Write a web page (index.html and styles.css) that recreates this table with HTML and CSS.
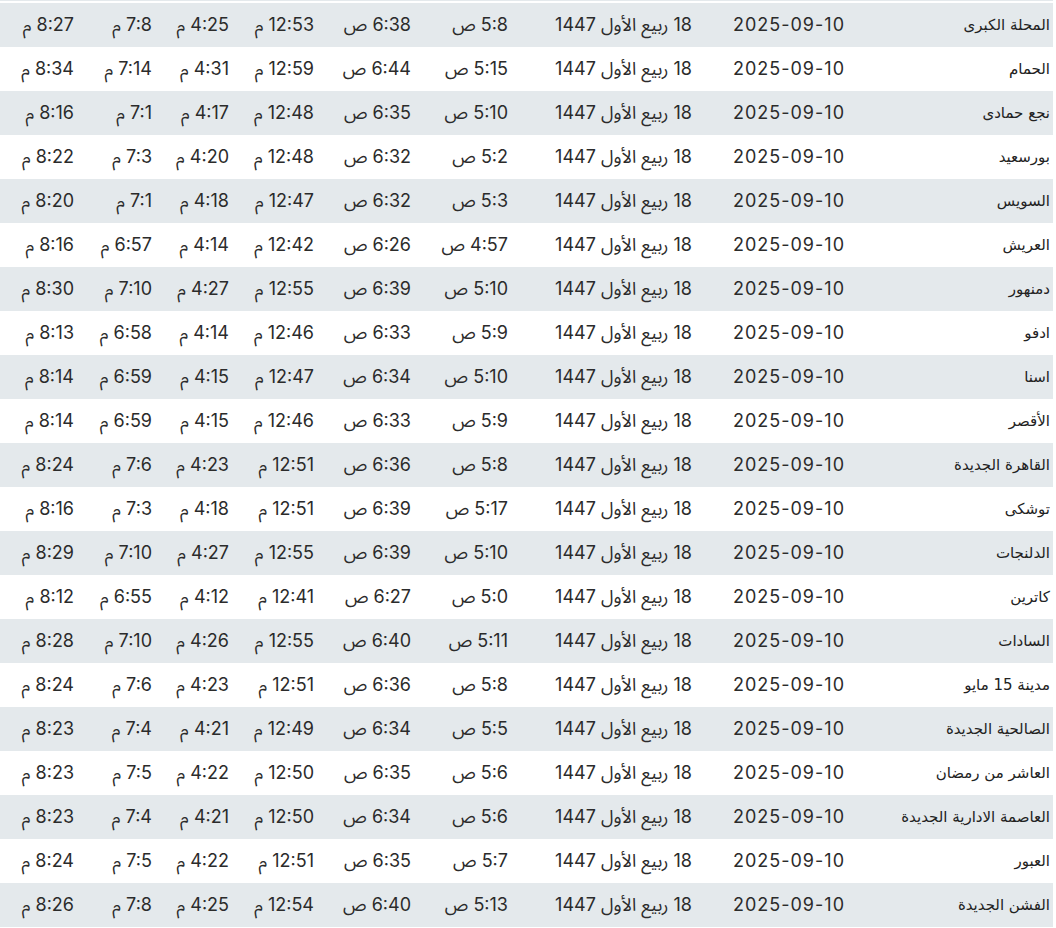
FILE: index.html
```html
<!DOCTYPE html>
<html lang="ar" dir="rtl">
<head>
<meta charset="utf-8">
<title>مواقيت الصلاة</title>
<link rel="stylesheet" href="styles.css">
</head>
<body>
<div class="topline"></div>
<table class="times">
<colgroup>
<col class="c-city"><col class="c-date"><col class="c-hijri"><col class="c-t1"><col class="c-t2"><col class="c-t3"><col class="c-t4"><col class="c-t5"><col class="c-t6">
</colgroup>
<tbody>
<tr><td class="city">المحلة الكبرى</td><td class="date">2025-09-10</td><td>18 ربيع الأول 1447</td><td>5:8 ص</td><td>6:38 ص</td><td>12:53 م</td><td>4:25 م</td><td>7:8 م</td><td>8:27 م</td></tr>
<tr><td class="city">الحمام</td><td class="date">2025-09-10</td><td>18 ربيع الأول 1447</td><td>5:15 ص</td><td>6:44 ص</td><td>12:59 م</td><td>4:31 م</td><td>7:14 م</td><td>8:34 م</td></tr>
<tr><td class="city">نجع حمادى</td><td class="date">2025-09-10</td><td>18 ربيع الأول 1447</td><td>5:10 ص</td><td>6:35 ص</td><td>12:48 م</td><td>4:17 م</td><td>7:1 م</td><td>8:16 م</td></tr>
<tr><td class="city">بورسعيد</td><td class="date">2025-09-10</td><td>18 ربيع الأول 1447</td><td>5:2 ص</td><td>6:32 ص</td><td>12:48 م</td><td>4:20 م</td><td>7:3 م</td><td>8:22 م</td></tr>
<tr><td class="city">السويس</td><td class="date">2025-09-10</td><td>18 ربيع الأول 1447</td><td>5:3 ص</td><td>6:32 ص</td><td>12:47 م</td><td>4:18 م</td><td>7:1 م</td><td>8:20 م</td></tr>
<tr><td class="city">العريش</td><td class="date">2025-09-10</td><td>18 ربيع الأول 1447</td><td>4:57 ص</td><td>6:26 ص</td><td>12:42 م</td><td>4:14 م</td><td>6:57 م</td><td>8:16 م</td></tr>
<tr><td class="city">دمنهور</td><td class="date">2025-09-10</td><td>18 ربيع الأول 1447</td><td>5:10 ص</td><td>6:39 ص</td><td>12:55 م</td><td>4:27 م</td><td>7:10 م</td><td>8:30 م</td></tr>
<tr><td class="city">ادفو</td><td class="date">2025-09-10</td><td>18 ربيع الأول 1447</td><td>5:9 ص</td><td>6:33 ص</td><td>12:46 م</td><td>4:14 م</td><td>6:58 م</td><td>8:13 م</td></tr>
<tr><td class="city">اسنا</td><td class="date">2025-09-10</td><td>18 ربيع الأول 1447</td><td>5:10 ص</td><td>6:34 ص</td><td>12:47 م</td><td>4:15 م</td><td>6:59 م</td><td>8:14 م</td></tr>
<tr><td class="city">الأقصر</td><td class="date">2025-09-10</td><td>18 ربيع الأول 1447</td><td>5:9 ص</td><td>6:33 ص</td><td>12:46 م</td><td>4:15 م</td><td>6:59 م</td><td>8:14 م</td></tr>
<tr><td class="city">القاهرة الجديدة</td><td class="date">2025-09-10</td><td>18 ربيع الأول 1447</td><td>5:8 ص</td><td>6:36 ص</td><td>12:51 م</td><td>4:23 م</td><td>7:6 م</td><td>8:24 م</td></tr>
<tr><td class="city">توشكى</td><td class="date">2025-09-10</td><td>18 ربيع الأول 1447</td><td>5:17 ص</td><td>6:39 ص</td><td>12:51 م</td><td>4:18 م</td><td>7:3 م</td><td>8:16 م</td></tr>
<tr><td class="city">الدلنجات</td><td class="date">2025-09-10</td><td>18 ربيع الأول 1447</td><td>5:10 ص</td><td>6:39 ص</td><td>12:55 م</td><td>4:27 م</td><td>7:10 م</td><td>8:29 م</td></tr>
<tr><td class="city">كاترين</td><td class="date">2025-09-10</td><td>18 ربيع الأول 1447</td><td>5:0 ص</td><td>6:27 ص</td><td>12:41 م</td><td>4:12 م</td><td>6:55 م</td><td>8:12 م</td></tr>
<tr><td class="city">السادات</td><td class="date">2025-09-10</td><td>18 ربيع الأول 1447</td><td>5:11 ص</td><td>6:40 ص</td><td>12:55 م</td><td>4:26 م</td><td>7:10 م</td><td>8:28 م</td></tr>
<tr><td class="city">مدينة 15 مايو</td><td class="date">2025-09-10</td><td>18 ربيع الأول 1447</td><td>5:8 ص</td><td>6:36 ص</td><td>12:51 م</td><td>4:23 م</td><td>7:6 م</td><td>8:24 م</td></tr>
<tr><td class="city">الصالحية الجديدة</td><td class="date">2025-09-10</td><td>18 ربيع الأول 1447</td><td>5:5 ص</td><td>6:34 ص</td><td>12:49 م</td><td>4:21 م</td><td>7:4 م</td><td>8:23 م</td></tr>
<tr><td class="city">العاشر من رمضان</td><td class="date">2025-09-10</td><td>18 ربيع الأول 1447</td><td>5:6 ص</td><td>6:35 ص</td><td>12:50 م</td><td>4:22 م</td><td>7:5 م</td><td>8:23 م</td></tr>
<tr><td class="city">العاصمة الادارية الجديدة</td><td class="date">2025-09-10</td><td>18 ربيع الأول 1447</td><td>5:6 ص</td><td>6:34 ص</td><td>12:50 م</td><td>4:21 م</td><td>7:4 م</td><td>8:23 م</td></tr>
<tr><td class="city">العبور</td><td class="date">2025-09-10</td><td>18 ربيع الأول 1447</td><td>5:7 ص</td><td>6:35 ص</td><td>12:51 م</td><td>4:22 م</td><td>7:5 م</td><td>8:24 م</td></tr>
<tr><td class="city">الفشن الجديدة</td><td class="date">2025-09-10</td><td>18 ربيع الأول 1447</td><td>5:13 ص</td><td>6:40 ص</td><td>12:54 م</td><td>4:25 م</td><td>7:8 م</td><td>8:26 م</td></tr>
</tbody>
</table>
</body>
</html>
```
FILE: styles.css
```css
html, body {
  padding: 0;
  background: #ffffff;
}
html {
  margin: 0;
}
body {
  width: 1053px;
  margin: 0 0 0 auto;
  margin-left: 0;
  margin-right: auto;
  font-family: "Inter", "Noto Sans Arabic", "DejaVu Sans", sans-serif;
  color: #2b2b2b;
}
.topline {
  height: 1px;
  background: #e4e9ec;
  margin-bottom: 2px;
}
.times {
  width: 1053px;
  border-collapse: collapse;
  table-layout: fixed;
}
.c-city { width: 205px; }
.c-date { width: 153px; }
.c-hijri { width: 184px; }
.c-t1 { width: 97px; }
.c-t2 { width: 97px; }
.c-t3 { width: 85px; }
.c-t4 { width: 77px; }
.c-t5 { width: 78px; }
.c-t6 { width: 77px; }
.times td {
  height: 44px;
  padding: 0 3px 0 0;
  text-align: right;
  vertical-align: middle;
  white-space: nowrap;
  font-size: 18px;
  line-height: 44px;
  box-sizing: border-box;
}
.times tr:nth-child(odd) {
  background: #e4e9ec;
}
.times td.date {
  letter-spacing: 1px;
}
.times td.city {
  font-family: "DejaVu Sans", "Liberation Sans", sans-serif;
  font-size: 15px;
  color: #222222;
}
```
